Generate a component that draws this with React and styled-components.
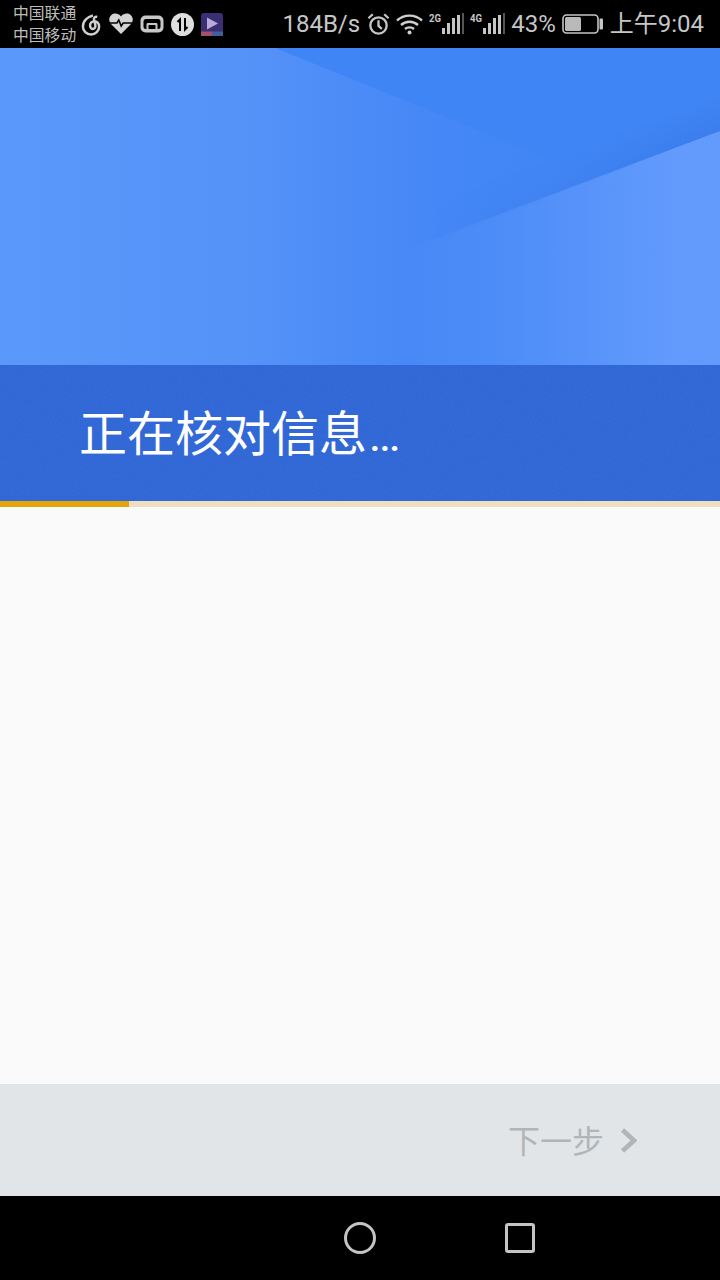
import styled, { createGlobalStyle } from 'styled-components';

const GlobalStyle = createGlobalStyle`
  * {
    box-sizing: border-box;
  }

  html,
  body {
    margin: 0;
    padding: 0;
    background: #000;
  }

  body {
    font-family: 'Roboto', 'Noto Sans CJK SC', sans-serif;
  }
`;

const grain = encodeURIComponent(
  `<svg xmlns='http://www.w3.org/2000/svg' width='240' height='136'><filter id='n'><feTurbulence type='fractalNoise' baseFrequency='0.7' numOctaves='2'/><feColorMatrix values='0 0 0 0 1 0 0 0 0 1 0 0 0 0 1 0 0 0 0.9 -0.35'/></filter><rect width='240' height='136' filter='url(%23n)' opacity='0.08'/></svg>`
).replace(/%2523/g, '%23');

const Screen = styled.div`
  width: 720px;
  height: 1280px;
  display: flex;
  flex-direction: column;
  overflow: hidden;
`;

const StatusBar = styled.header`
  height: 48px;
  flex: none;
  background: #000;
  color: #c6c6c6;
  display: flex;
  align-items: center;
  padding: 0 16px 0 13px;
`;

const Carriers = styled.div`
  font-family: 'Noto Sans CJK SC', sans-serif;
  font-size: 15.8px;
  line-height: 22px;
  width: 68px;
  flex: none;
  color: #bdbdbd;
`;

const AppIcons = styled.div`
  display: flex;
  align-items: center;
  gap: 7px;
`;

const Indicators = styled.div`
  margin-left: auto;
  display: flex;
  align-items: center;
  gap: 6px;
`;

const StatusText = styled.span`
  font-size: 24px;
  line-height: 48px;
  margin-left: ${(p) => p.$left || 0}px;
  margin-right: ${(p) => p.$right || 0}px;
  white-space: nowrap;
`;

const Hero = styled.section`
  height: 317px;
  flex: none;
  position: relative;
  overflow: hidden;
  background: linear-gradient(90deg, #5b98fb 0%, #5693f9 33%, #4788f6 57%, #4386f6 68%, #4084f6 100%);
`;

const DarkWedge = styled.div`
  position: absolute;
  inset: 0;
  clip-path: polygon(275px 0, 720px 0, 720px 180px);
  background: #4085f6;
`;

const WedgeShade = styled.div`
  position: absolute;
  inset: 0;
  background: linear-gradient(159deg, rgba(56, 118, 225, 0) 300px, rgba(56, 118, 225, 0.5) 336px, rgba(56, 118, 225, 0) 337px);
  mask-image: linear-gradient(90deg, transparent 60%, #000 98%);
`;

const LightSlope = styled.div`
  position: absolute;
  inset: 0;
  clip-path: polygon(720px 83px, 720px 317px, 100px 317px);
  background: linear-gradient(90deg, rgba(99, 155, 252, 0) 56%, rgba(99, 155, 252, 0.6) 80%, #639bfc 94%);
`;

const Banner = styled.div`
  height: 136px;
  flex: none;
  background: url("data:image/svg+xml,${grain}"), #3067d6;
  display: flex;
  align-items: center;
  padding: 3px 0 0 79px;
`;

const BannerTitle = styled.h1`
  margin: 0;
  color: #fff;
  font-family: 'Noto Sans CJK SC', sans-serif;
  font-size: 48px;
  font-weight: 400;
  line-height: 60px;
  white-space: nowrap;
`;

const Dots = styled.span`
  font-family: 'Roboto', sans-serif;
  font-size: 34px;
  font-weight: 700;
  margin-left: 3px;
`;

const ProgressTrack = styled.div`
  height: 6px;
  flex: none;
  background: #eee0bf;
`;

const ProgressFill = styled.div`
  height: 100%;
  background: #e5a509;
`;

const Content = styled.main`
  flex: 1;
  background: #fafafa;
`;

const Footer = styled.footer`
  height: 112px;
  flex: none;
  background: #e1e5e8;
  display: flex;
  align-items: center;
  justify-content: flex-end;
  padding-right: 83px;
  gap: 16px;
`;

const NextLabel = styled.span`
  font-family: 'Noto Sans CJK SC', sans-serif;
  font-size: 32px;
  line-height: 40px;
  color: #b1b5b8;
  margin-bottom: 3px;
`;

const NavBar = styled.nav`
  height: 84px;
  flex: none;
  background: #000;
  display: flex;
  align-items: center;
  padding-left: 344px;
  gap: 129px;
`;

const HomeKey = styled.div`
  width: 32px;
  height: 32px;
  border: 3px solid #c4c4c4;
  border-radius: 50%;
`;

const RecentKey = styled.div`
  width: 30px;
  height: 30px;
  border: 3px solid #c4c4c4;
  border-radius: 3px;
`;

const NeteaseIcon = () => (
  <svg width="21" height="23" viewBox="0 0 22 24" fill="none" stroke="#d0d0d0" strokeWidth="2.6">
    <path d="M12.5 2.5C7 4 2 8 2 14a8.5 8.500 0 0 0 17 0c0-3.5-2.5-5.5-5-5.500s-4.500 2-4.500 4.500 1.700 3.600 3 3.600 2.800-1.200 2.600-3.600L13.600 6.500c-.3-1.500 1-3 3.400-2.400" />
  </svg>
);

const HeartIcon = () => (
  <svg width="24" height="22" viewBox="0 0 24 22">
    <path d="M12 21 2.200 11.200C-.6 8-.2 4 2.400 2 5-.3 9.400.2 12 3.400 14.600.2 19-.3 21.600 2c2.600 2 3 6 .2 9.200z" fill="#d4d4d4" />
    <path d="M1 10h7l1.800-3 2.400 6 2-3h8.800" fill="none" stroke="#000" strokeWidth="1.600" />
  </svg>
);

const GamepadIcon = () => (
  <svg width="24" height="18" viewBox="0 0 24 18">
    <rect x="0.5" y="0.5" width="23" height="17" rx="5" fill="#c8c8c8" />
    <rect x="3.500" y="4" width="17" height="10" rx="2.500" fill="#000" />
    <path d="M6.500 14V9.500C6.500 8.500 7 8 8 8h8c1 0 1.500.5 1.500 1.500V14z" fill="#c8c8c8" />
    <rect x="8.500" y="10" width="7" height="4" fill="#000" />
  </svg>
);

const TransferIcon = () => (
  <svg width="23" height="23" viewBox="0 0 23 23">
    <circle cx="11.500" cy="11.500" r="11.500" fill="#dedede" />
    <path d="M9 18V6.500L6.500 9M14 5v11.500l2.500-2.500" fill="none" stroke="#000" strokeWidth="2" />
  </svg>
);

const PlayerIcon = () => (
  <svg width="22" height="23" viewBox="0 0 22 23">
    <rect width="22" height="23" rx="3" fill="#3b2f73" />
    <rect y="18.500" width="11" height="4.500" fill="#a3506e" />
    <rect x="11" y="18.500" width="11" height="4.500" fill="#3f5f9e" />
    <path d="M6 4.500 17 10.500 6 16.500z" fill="#b9a9dc" />
  </svg>
);

const AlarmIcon = () => (
  <svg width="23" height="24" viewBox="0 0 24 24" fill="none" stroke="#c6c6c6" strokeWidth="2.400">
    <circle cx="12" cy="13.500" r="8.500" />
    <path d="M12 8v6l3.500 3M1.500 6 6 1.800M22.500 6 18 1.800" />
  </svg>
);

const WifiIcon = () => (
  <svg width="27" height="22" viewBox="0 0 27 22" fill="none" stroke="#cfcfcf" strokeWidth="2.400">
    <path d="M1 7.500c7-6.500 18-6.500 25 0M5 12c4.800-4.300 12.200-4.300 17 0M9 16c2.500-2.200 6.500-2.200 9 0" />
    <circle cx="13.500" cy="19.500" r="2" fill="#cfcfcf" stroke="none" />
  </svg>
);

const SignalIcon = ({ label, width }) => (
  <svg width={width} height="26" viewBox={`0 0 ${width} 26`}>
    <text x="0" y="11" fontFamily="Roboto, sans-serif" fontSize="11" fontWeight="700" fill="#c6c6c6" textLength="12" lengthAdjust="spacingAndGlyphs">
      {label}
    </text>
    <rect x="13" y="17" width="3" height="6" fill="#c6c6c6" />
    <rect x="18" y="12" width="3" height="11" fill="#c6c6c6" />
    <rect x="23" y="7" width="3" height="16" fill="#c6c6c6" />
    <rect x="28" y="4" width="3" height="19" fill="#c6c6c6" />
    <rect x="33" y="2" width="2" height="21" fill="#555" />
  </svg>
);

const BatteryIcon = () => (
  <svg width="41" height="20" viewBox="0 0 41 20">
    <rect x="1" y="1" width="35" height="18" rx="3.500" fill="none" stroke="#c6c6c6" strokeWidth="1.600" />
    <rect x="3" y="3" width="16" height="14" rx="1.500" fill="#b9b9b9" />
    <rect x="37.500" y="4.500" width="3.500" height="11" rx="1" fill="#c6c6c6" />
  </svg>
);

const ChevronIcon = () => (
  <svg width="17" height="25" viewBox="0 0 17 25" fill="none" stroke="#b1b5b8" strokeWidth="4.600">
    <path d="M2.500 2 14 12.500 2.500 23" />
  </svg>
);

export default function App() {
  const progress = 129;

  return (
    <Screen>
      <GlobalStyle />
      <StatusBar>
        <Carriers>
          <div>中国联通</div>
          <div>中国移动</div>
        </Carriers>
        <AppIcons>
          <NeteaseIcon />
          <HeartIcon />
          <GamepadIcon />
          <TransferIcon />
          <PlayerIcon />
        </AppIcons>
        <Indicators>
          <StatusText $right={1}>184B/s</StatusText>
          <AlarmIcon />
          <WifiIcon />
          <SignalIcon label="2G" width={35} />
          <SignalIcon label="4G" width={36} />
          <StatusText $left={-1}>43%</StatusText>
          <BatteryIcon />
          <StatusText $left={1}>上午9:04</StatusText>
        </Indicators>
      </StatusBar>
      <Hero>
        <DarkWedge />
        <WedgeShade />
        <LightSlope />
      </Hero>
      <Banner>
        <BannerTitle>
          正在核对信息<Dots>...</Dots>
        </BannerTitle>
      </Banner>
      <ProgressTrack>
        <ProgressFill style={{ width: progress }} />
      </ProgressTrack>
      <Content />
      <Footer>
        <NextLabel>下一步</NextLabel>
        <ChevronIcon />
      </Footer>
      <NavBar>
        <HomeKey />
        <RecentKey />
      </NavBar>
    </Screen>
  );
}
